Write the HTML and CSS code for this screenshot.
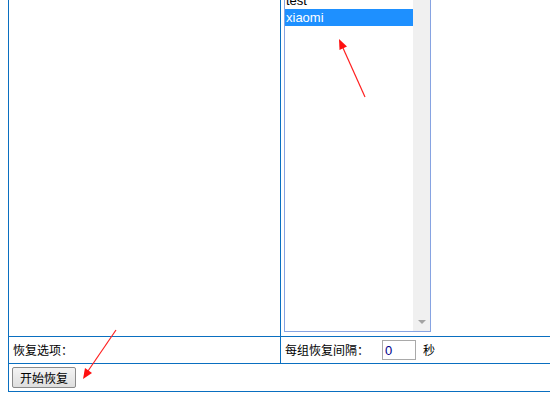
FILE: index.html
```html
<!DOCTYPE html>
<html lang="zh-CN">
<head>
  <meta charset="UTF-8">
  <title>恢复</title>
  <link rel="stylesheet" href="styles.css">
</head>
<body>

  <table class="restore-table">
    <tr>
      <td class="cell-left"></td>
      <td class="cell-list">
        <div class="listbox">
          <div class="list-items">
            <div class="list-item">admin</div>
            <div class="list-item">test</div>
            <div class="list-item selected">xiaomi</div>
          </div>
          <div class="list-scroll">
            <span class="scroll-down"></span>
          </div>
        </div>
      </td>
    </tr>
    <tr>
      <td class="cell-text">恢复选项：</td>
      <td class="cell-text">每组恢复间隔：<input type="text" class="interval" value="0"><span class="unit">秒</span></td>
    </tr>
    <tr>
      <td class="cell-btn" colspan="2"><button class="start-btn">开始恢复</button></td>
    </tr>
  </table>

  <!-- annotation arrows -->
  <svg class="marks" width="550" height="396" viewBox="0 0 550 396">
    <line x1="365" y1="97" x2="343" y2="48" stroke="#ff2020" stroke-width="1.2"/>
    <polygon points="339,39 347,46.5 339.5,50" fill="#ff1010"/>
    <line x1="116" y1="330" x2="88" y2="371" stroke="#ff2020" stroke-width="1.2"/>
    <polygon points="83,379 92,373 85,368" fill="#ff1010"/>
  </svg>

</body>
</html>
```

FILE: styles.css
```css
html, body {
  overflow: hidden;
}
body {
  margin: 0 0 0 8px;
  font-family: "Noto Sans CJK SC", "Liberation Sans", sans-serif;
  font-size: 12px;
  color: #000;
  background: #fff;
}
.restore-table {
  margin-top: -30px;
  width: 620px;
  border-collapse: collapse;
  border: 1px solid #0a6fc0;
}
.restore-table td {
  border: 1px solid #0a6fc0;
  padding: 3px 3px;
  vertical-align: middle;
}
.cell-left {
  width: 265px;
}
.cell-list {
  padding-bottom: 4px !important;
}
.listbox {
  display: flex;
  width: 145px;
  height: 356px;
  border: 1px solid #86a3e2;
  background: #fff;
}
.list-items {
  flex: 1;
  font-family: "Liberation Sans", Arial, sans-serif;
  font-size: 13px;
}
.list-item {
  height: 17px;
  line-height: 17px;
  padding-left: 1px;
}
.list-item.selected {
  background: #1e90ff;
  color: #fff;
}
.list-scroll {
  width: 17px;
  background: #f0f0f0;
  display: flex;
  flex-direction: column;
  justify-content: flex-end;
  align-items: center;
}
.scroll-down {
  width: 0;
  height: 0;
  margin-bottom: 7px;
  border-left: 4px solid transparent;
  border-right: 4px solid transparent;
  border-top: 4px solid #a3a3a3;
}
.cell-text {
  height: 20px;
  line-height: 20px;
  padding-left: 4px !important;
  white-space: nowrap;
}
.interval {
  box-sizing: border-box;
  width: 34px;
  height: 20px;
  margin: 0 0 0 13px;
  padding: 0 2px;
  border: 1px solid #a9a9a9;
  font-family: "Liberation Sans", Arial, sans-serif;
  font-size: 13px;
  color: #00008b;
  vertical-align: top;
}
.unit {
  margin-left: 7px;
}
.cell-btn {
  height: 21px;
}
.start-btn {
  display: block;
  box-sizing: border-box;
  width: 64px;
  height: 21px;
  padding: 0;
  border: 1px solid #8a8a8a;
  border-radius: 2px;
  background: linear-gradient(#f4f4f4, #dedede);
  font-family: "Noto Sans CJK SC", sans-serif;
  font-size: 12px;
  color: #000;
}
.marks {
  position: absolute;
  top: 0;
  left: 0;
  pointer-events: none;
}
```
